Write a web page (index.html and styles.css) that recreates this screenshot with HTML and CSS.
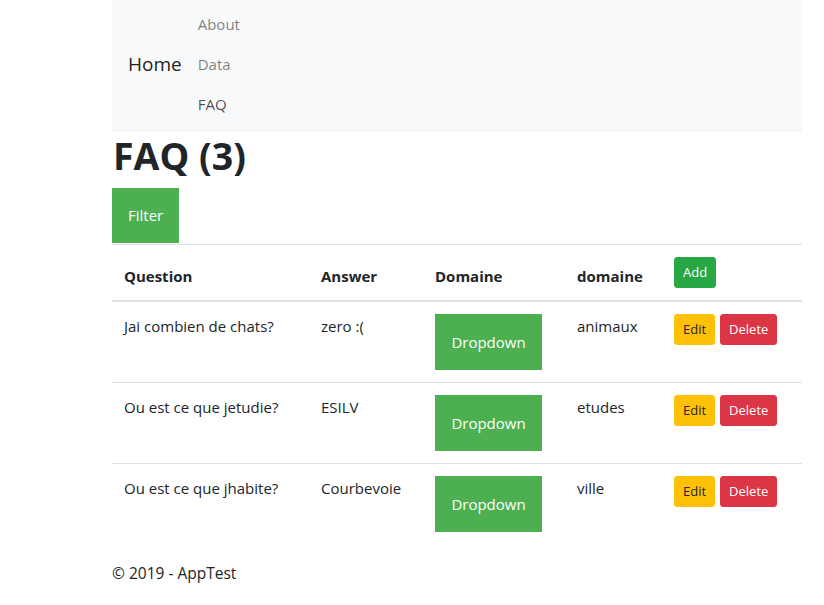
FILE: index.html
```html
<!DOCTYPE html>
<html lang="en">
<head>
<meta charset="utf-8">
<title>FAQ - AppTest</title>
<link rel="stylesheet" href="styles.css">
</head>
<body>
<div class="container">
  <nav class="navbar">
    <a class="brand" href="#">Home</a>
    <ul class="nav">
      <li><a class="nav-link" href="#">About</a></li>
      <li><a class="nav-link" href="#">Data</a></li>
      <li><a class="nav-link nav-link-dark" href="#">FAQ</a></li>
    </ul>
  </nav>
  <main>
    <h1 class="title">FAQ (3)</h1>
    <button class="drop-btn">Filter</button>
    <table class="table">
      <colgroup>
        <col class="c1"><col class="c2"><col class="c3"><col class="c4"><col class="c5">
      </colgroup>
      <thead>
        <tr>
          <th>Question</th>
          <th>Answer</th>
          <th>Domaine</th>
          <th>domaine</th>
          <th><button class="btn btn-success">Add</button></th>
        </tr>
      </thead>
      <tbody>
        <tr>
          <td>Jai combien de chats?</td>
          <td>zero :(</td>
          <td><button class="drop-btn">Dropdown</button></td>
          <td>animaux</td>
          <td><div class="actions"><button class="btn btn-warning">Edit</button><button class="btn btn-danger">Delete</button></div></td>
        </tr>
        <tr>
          <td>Ou est ce que jetudie?</td>
          <td>ESILV</td>
          <td><button class="drop-btn">Dropdown</button></td>
          <td>etudes</td>
          <td><div class="actions"><button class="btn btn-warning">Edit</button><button class="btn btn-danger">Delete</button></div></td>
        </tr>
        <tr>
          <td>Ou est ce que jhabite?</td>
          <td>Courbevoie</td>
          <td><button class="drop-btn">Dropdown</button></td>
          <td>ville</td>
          <td><div class="actions"><button class="btn btn-warning">Edit</button><button class="btn btn-danger">Delete</button></div></td>
        </tr>
      </tbody>
    </table>
  </main>
  <footer class="footer">&copy; 2019 - AppTest</footer>
</div>
</body>
</html>
```

FILE: styles.css
```css
* { box-sizing: border-box; }

html, body {
  margin: 0;
  padding: 0;
  background: #fff;
}

body {
  font-family: "Open Sans", "Noto Sans", sans-serif;
  font-size: 15px;
  line-height: 24px;
  color: #212529;
}

.container {
  width: 690px;
  margin-left: 112px;
}

.navbar {
  display: flex;
  align-items: center;
  background: #f8f9fa;
  padding: 4px 16px 8px;
}

.brand {
  font-size: 19px;
  line-height: 30px;
  color: rgba(0, 0, 0, 0.9);
  text-decoration: none;
  margin-right: 16px;
}

.nav {
  list-style: none;
  margin: 0;
  padding: 0;
  display: flex;
  flex-direction: column;
}

.nav-link {
  display: block;
  padding: 8px 0;
  color: rgba(0, 0, 0, 0.5);
  text-decoration: none;
}

.nav-link-dark {
  color: rgba(0, 0, 0, 0.7);
}

.title {
  font-size: 37.5px;
  font-weight: 700;
  line-height: 48px;
  margin: 0 0 8px;
  padding-left: 1px;
}

.drop-btn {
  display: block;
  background: #4caf50;
  color: #fff;
  border: none;
  padding: 16px;
  font-family: inherit;
  font-size: 15px;
  line-height: 23px;
  cursor: pointer;
}

td .drop-btn {
  line-height: 24px;
  width: 107px;
  padding: 16px 0;
  text-align: center;
}

.table {
  width: 100%;
  border-collapse: collapse;
  table-layout: fixed;
  margin-top: 1px;
}

.c1 { width: 197px; }
.c2 { width: 114px; }
.c3 { width: 142px; }
.c4 { width: 97px; }
.c5 { width: 140px; }

.table th,
.table td {
  padding: 12px;
  border-top: 1px solid #dee2e6;
  vertical-align: top;
  text-align: left;
}

.table th {
  font-weight: 700;
  vertical-align: bottom;
  border-bottom: 2px solid #dee2e6;
}

.actions {
  display: flex;
  gap: 5px;
}

.btn {
  display: inline-block;
  font-family: inherit;
  font-size: 13px;
  font-weight: 400;
  line-height: 21px;
  padding: 4px 8px;
  border: 1px solid transparent;
  border-radius: 3px;
  color: #fff;
  cursor: pointer;
}

.btn-success {
  background: #28a745;
  border-color: #28a745;
}

.btn-warning {
  background: #ffc107;
  border-color: #ffc107;
  color: #212529;
}

.btn-danger {
  background: #dc3545;
  border-color: #dc3545;
}

.footer {
  margin-top: 17px;
  line-height: 24px;
  font-size: 15.5px;
}
```
